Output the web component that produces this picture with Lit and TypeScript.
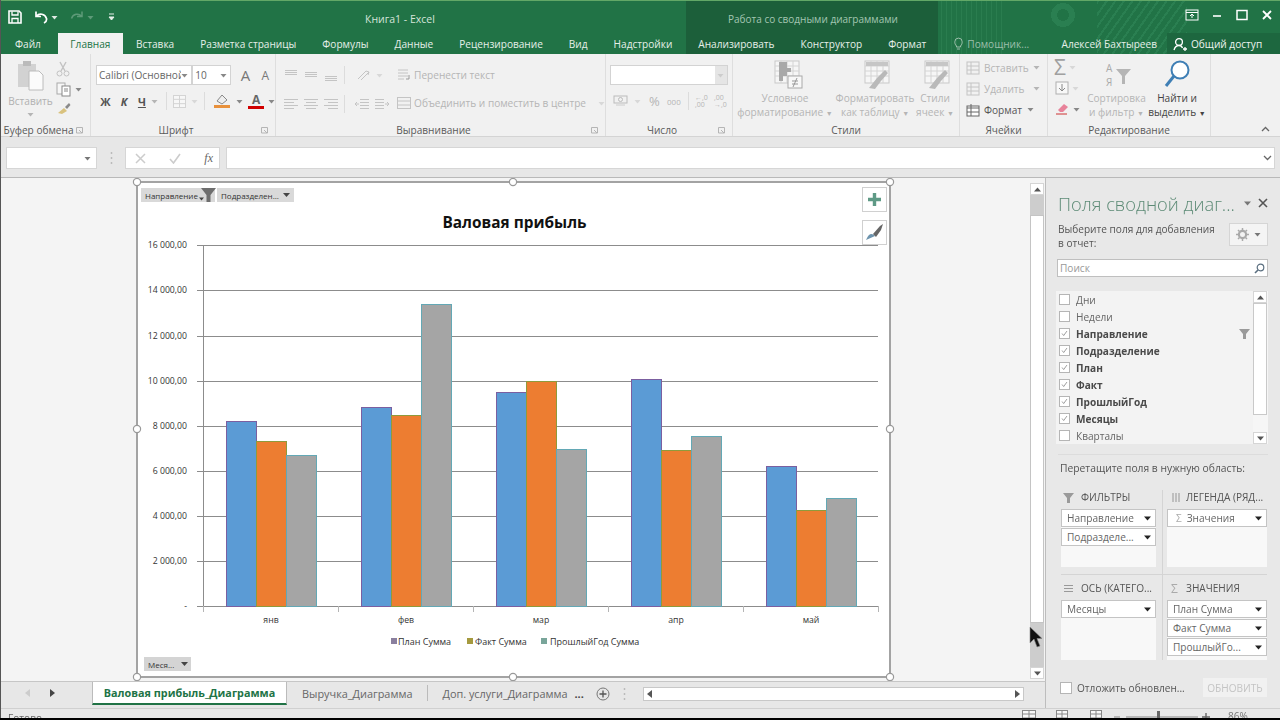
import { LitElement, html, css, svg } from "lit";
import { customElement } from "lit/decorators.js";

const G = "#c4c4c4";
const ic = (w: number, h: number, body: unknown) =>
  html`<svg class="ic" width=${w} height=${h} viewBox="0 0 ${w} ${h}" fill="none">${body}</svg>`;
const caret = (c = "#b5b5b5") => ic(7, 5, svg`<path d="M0.5 1 H6.5 L3.5 4.5Z" fill=${c}/>`);

const lines = (ys: number[], xs: [number, number][]) =>
  ic(16, 14, ys.map((y, i) => svg`<path d="M${xs[i][0]} ${y}H${xs[i][1]}" stroke=${G}/>`));
const alignIcons = {
  top: lines([2.5, 4.5, 6.5], [[2, 14], [2, 14], [2, 14]]),
  mid: lines([4.5, 6.5, 8.5], [[2, 14], [2, 14], [2, 14]]),
  bot: lines([8.5, 10.5, 12.5], [[2, 14], [2, 14], [2, 14]]),
  left: lines([2.5, 5.5, 8.5, 11.5], [[1, 15], [1, 11], [1, 15], [1, 11]]),
  center: lines([2.5, 5.5, 8.5, 11.5], [[1, 15], [3, 13], [1, 15], [3, 13]]),
  right: lines([2.5, 5.5, 8.5, 11.5], [[1, 15], [5, 15], [1, 15], [5, 15]]),
  outdent: ic(16, 14, svg`<path d="M6 2.5H15M6 5.5H15M6 8.5H15M6 11.5H15M1 7H5M1 7L3 5M1 7L3 9" stroke=${G}/>`),
  indent: ic(16, 14, svg`<path d="M1 2.5H10M1 5.5H10M1 8.5H10M1 11.5H10M15 7H11M15 7L13 5M15 7L13 9" stroke=${G}/>`),
};
const gridIc = (w: number, h: number, c = G) =>
  ic(w, h, svg`<rect x=".5" y=".5" width=${w - 1} height=${h - 1} fill="#f7f7f7" stroke=${c}/>
  <path d="M${w / 2} 0V${h}M0 ${h / 3}H${w}M0 ${(2 * h) / 3}H${w}" stroke=${c}/>`);

const bigTable = (kind: string) =>
  ic(36, 30, svg`<rect x="8" y="1" width="24" height="22" fill="#f6f6f6" stroke="#c9c9c9"/>
  <path d="M8 6H32M8 11H32M8 16H32M14 1V23M20 1V23M26 1V23" stroke="#d4d4d4"/>
  ${kind === "cond"
    ? svg`<path d="M12 2H20V8H24V12H20V16H16V21H12Z" fill="#a9a9a9"/><rect x="21" y="16" width="14" height="12" fill="#f8f8f8" stroke="#aaa"/><path d="M25 21H31M25 24H31M30 18L26 27" stroke="#999"/>`
    : svg`<path d="M9 2H31V6H9Z" fill="#c6c6c6"/><path d="M12 28L20 18L28 10L31 13L24 21L18 29Z" fill="#b9b9b9"/>`}`);

const FIELDS: [string, boolean, boolean?][] = [
  ["Дни", false], ["Недели", false], ["Направление", true, true], ["Подразделение", true], ["План", true],
  ["Факт", true], ["ПрошлыйГод", true], ["Месяцы", true], ["Кварталы", false],
];

@customElement("pivot-chart")
class PivotChart extends LitElement {
  static styles = css`
    :host { display: block; }
    svg { display: block; }
    text { font-family: "Open Sans", "Noto Sans", sans-serif; }
  `;
  render() {
    const grid = [245, 290, 336, 381, 426, 471, 516, 561, 606];
    const vals = ["16 000,00", "14 000,00", "12 000,00", "10 000,00", "8 000,00", "6 000,00", "4 000,00", "2 000,00", "-"];
    const groups = [
      { x: 226, t: [421, 441, 455], l: "янв" }, { x: 361, t: [407, 415, 304], l: "фев" },
      { x: 496, t: [392, 381, 449], l: "мар" }, { x: 631, t: [379, 450, 436], l: "апр" },
      { x: 766, t: [466, 510, 498], l: "май" },
    ];
    const fill = ["#5b9bd5", "#ed7d31", "#a5a5a5"];
    const edge = ["#7b5fa0", "#8f9a3c", "#63a8b5"];
    const handles = [[137, 182], [513, 182], [890, 182], [137, 429], [890, 429], [137, 677], [513, 677], [890, 677]];
    return html`<svg width="770" height="503" viewBox="130 178 770 503">
      <rect x="137" y="182" width="753" height="495" fill="#fff" stroke="#a3a3a3" stroke-width="2"/>
      ${grid.map((y) => svg`<path d="M197 ${y}.5H878" stroke="#8c8c8c"/>`)}
      <path d="M203.5 245V612" stroke="#8c8c8c"/>
      ${[203, 338, 473, 608, 743, 878].map((x) => svg`<path d="M${x}.5 606V612" stroke="#b5b5b5"/>`)}
      ${vals.map((v, i) => svg`<text x="187" y=${grid[i] + 3} text-anchor="end" font-size="8.7" fill="#333">${v}</text>`)}
      ${groups.map((g) => svg`
        ${g.t.map((t, i) => svg`<rect x=${g.x + i * 30 + 0.5} y=${t + 0.5} width="30" height=${606 - t} fill=${fill[i]} stroke=${edge[i]}/>`)}
        <text x=${g.x + 45} y="623" text-anchor="middle" font-size="8.7" fill="#333">${g.l}</text>`)}
      <text x="514.5" y="228" text-anchor="middle" font-size="15.4" font-weight="700" fill="#111">Валовая прибыль</text>
      <rect x="391" y="638" width="6" height="6" fill="#8a7f9e"/>
      <text x="398" y="644.5" font-size="9" fill="#333">План Сумма</text>
      <rect x="467" y="638" width="6" height="6" fill="#a59a3f"/>
      <text x="475" y="644.5" font-size="9" fill="#333">Факт Сумма</text>
      <rect x="541" y="638" width="6" height="6" fill="#79a59a"/>
      <text x="550" y="644.5" font-size="9" fill="#333">ПрошлыйГод Сумма</text>

      <rect x="141" y="188" width="74" height="14" fill="#d9d9d9"/>
      <text x="145" y="198.5" font-size="8" fill="#333">Направление</text>
      <path d="M199 197.5h5l-2.5 3z" fill="#444"/>
      <path d="M201 188H216L210.5 195V202H206.5V195Z" fill="#6e6e6e"/>
      <rect x="217" y="188" width="77" height="14" fill="#d9d9d9"/>
      <text x="221" y="198.5" font-size="8" fill="#333">Подразделен...</text>
      <path d="M283 193h7l-3.5 4z" fill="#444"/>
      <rect x="144" y="657" width="47" height="14" fill="#d4d4d4"/>
      <text x="148" y="667.5" font-size="8" fill="#333">Меся...</text>
      <path d="M181 662h7l-3.5 4z" fill="#444"/>

      <rect x="862.5" y="187.5" width="24" height="24" fill="#fff" stroke="#d0d0d0"/>
      <path d="M874.5 193V206M868 199.5H881" stroke="#5f9a86" stroke-width="3.4"/>
      <rect x="862.5" y="220.5" width="24" height="24" fill="#fff" stroke="#d0d0d0"/>
      <path d="M866 240C869 233 872 233 875 236Z" fill="#6d93ad"/>
      <path d="M873 234L880 226L883 224L881 230L876 237Z" fill="#666"/>
      ${handles.map(([x, y]) => svg`<circle cx=${x} cy=${y} r="3.6" fill="#fff" stroke="#999" stroke-width="1.2"/>`)}
    </svg>`;
  }
}

@customElement("app-root")
class AppRoot extends LitElement {
  static styles = css`
    :host { display: block; width: 1280px; height: 720px; overflow: hidden; background: #000;
      font-family: "Open Sans", "Noto Sans", sans-serif; font-size: 10.1px; color: #444; }
    .ic { display: block; flex: none; }
    .app { filter: blur(0.4px); height: 718px; display: flex; flex-direction: column; border-left: 1px solid #555; box-sizing: border-box; }

    .head { flex: none; height: 54px; box-sizing: border-box; border-top: 1px solid #62a867; color: #fff;
      background:
        radial-gradient(circle at 1062px 14px, transparent 6px, #2a7f51 6px, #2a7f51 12px, transparent 12px),
        repeating-linear-gradient(90deg, #2a7d4f 0 1px, transparent 1px 5px) 940px 0 / 62px 100% no-repeat,
        repeating-linear-gradient(125deg, #2a7f51 0 2px, transparent 2px 7px) 1096px 0 / 90px 100% no-repeat,
        linear-gradient(90deg, transparent 685px, #1c5f3a 685px, #1c5f3a 937px, transparent 937px),
        #217346; }
    .title { height: 32px; display: flex; align-items: center; }
    .qat { display: flex; align-items: center; width: 364px; padding-left: 7px; box-sizing: border-box; }
    .book { width: 363px; color: #d4e4da; font-size: 10.5px; padding-top: 4px; }
    .ctx { width: 420px; color: #a3c6b2; font-size: 10px; padding-top: 4px; }
    .win { display: flex; align-items: center; margin-left: auto; gap: 12px; padding: 0 7px 5px 0; }
    .tabs { height: 21px; display: flex; align-items: stretch; padding-left: 1px; }
    .tab { padding: 0 13px; display: flex; align-items: center; color: #e6efe9; white-space: nowrap; }
    .tab.on { background: #f1f1f1; color: #217346; padding: 0 12.5px; margin-left: 4px; }
    .tab.hint { color: #9dbfab; gap: 4px; padding-left: 15px; }
    .user { margin-left: auto; padding-right: 10px; display: flex; align-items: center; color: #e6efe9; white-space: nowrap; }
    .share { width: 113px; box-sizing: border-box; background: #1d673f; display: flex; align-items: center; gap: 3px; padding-left: 6px; color: #eef4f0; white-space: nowrap; }

    .ribbon { flex: none; height: 83px; display: flex; background: #f1f1f1; border-bottom: 1px solid #d4d4d4; box-sizing: border-box; color: #b5b5b5; }
    .grp { display: flex; flex-direction: column; border-right: 1px solid #dedede; box-sizing: border-box; flex: none; }
    .body { flex: 1; display: flex; min-height: 0; }
    .lab { height: 12px; display: flex; align-items: center; color: #5a5a5a; }
    .lab span { flex: 1; text-align: center; }
    .lab i { width: 14px; display: flex; }
    .col { display: flex; flex-direction: column; }
    .row { display: flex; align-items: center; white-space: nowrap; }
    .big { display: flex; flex-direction: column; align-items: center; line-height: 14px; text-align: center; white-space: nowrap; }
    .big .pic { height: 36px; display: flex; align-items: flex-end; margin-bottom: 1px; }
    .big small { font-size: 7px; }
    .dark { color: #444; }
    .sel { height: 20px; background: #fff; border: 1px solid #d3d3d3; box-sizing: border-box; display: flex; align-items: center; color: #666; padding-left: 2px; justify-content: space-between; padding-right: 3px; white-space: nowrap; overflow: hidden; }
    .vsep { width: 1px; height: 18px; background: #dcdcdc; flex: none; }
    .bold { font-weight: 700; color: #555; font-size: 11px; }
    .font1 { width: 98px; }
    .font2 { width: 39px; }

    .fbar { flex: none; height: 41px; background: #e7e7e7; display: flex; align-items: center; padding: 2px 5px 0 5px; box-sizing: border-box; border-bottom: 1px solid #b9b9b9; }
    .fbox { height: 22px; background: #fff; border: 1px solid #d6d6d6; box-sizing: border-box; display: flex; align-items: center; flex: none; }

    .work { flex: 1; min-height: 0; display: flex; }
    .leftc { flex: 1; min-width: 0; display: flex; flex-direction: column; }
    .sheetrow { flex: 1; min-height: 0; display: flex; background: #f4f4f4; border-right: 1px solid #bdbdbd; }
    .canvas { flex: none; width: 1029px; padding-left: 129px; box-sizing: border-box; }
    .vbar { width: 15px; display: flex; flex-direction: column; padding-top: 5px; box-sizing: border-box; background: #f4f4f4; position: relative; }
    .sb { height: 12px; background: #fff; border: 1px solid #d5d5d5; box-sizing: border-box; display: flex; align-items: center; justify-content: center; flex: none; width: 14px; }
    .vtr { height: 20px; background: #cdcdcd; width: 14px; }
    .vth { height: 408px; background: #fff; border: 1px solid #c4c4c4; box-sizing: border-box; width: 14px; }
    .vtr2 { flex: 1; background: #cdcdcd; width: 14px; }
    .cursor { position: absolute; left: -1px; top: 448px; }

    .stabs { flex: none; height: 27px; display: flex; background: #e7e7e7; border-top: 1px solid #c6c6c6; border-right: 1px solid #bdbdbd; box-sizing: border-box; font-size: 10.9px; color: #666; }
    .nav { width: 91px; display: flex; align-items: center; gap: 20px; padding: 0 0 4px 24px; box-sizing: border-box; }
    .stab { display: flex; align-items: center; padding: 0 15px; white-space: nowrap; height: 23px; }
    .stab.on { width: 195px; box-sizing: border-box; justify-content: center; padding: 0; background: #fff; color: #217346; font-weight: 700; border-bottom: 2px solid #217346; border-left: 1px solid #bbb; border-right: 1px solid #bbb; font-size: 10.8px; }
    .stab.cut { width: 126px; padding: 0; margin: 0 6px 0 14px; overflow: hidden; display: block; line-height: 23px; }
    .tsep { width: 1px; height: 16px; background: #bbb; margin-top: 3px; }
    .hbar { height: 14px; width: 381px; margin: 5px 0 0 17px; background: #fff; border: 1px solid #c8c8c8; box-sizing: border-box; display: flex; justify-content: space-between; align-items: center; padding: 0 3px; }

    .panel { flex: none; width: 234px; background: #e8e8e8; box-sizing: border-box; padding: 14px 12px 0 12px; display: flex; flex-direction: column; }
    .ptitle { display: flex; align-items: center; height: 22px; font-size: 18.3px; color: #5c8a75; white-space: nowrap; font-weight: 300; }
    .ptitle span { width: 184px; overflow: hidden; }
    .pctl { display: flex; align-items: center; gap: 7px; margin-left: 3px; }
    .phint { display: flex; justify-content: space-between; margin-top: 8px; height: 29px; line-height: 14px; color: #555; }
    .gear { width: 39px; height: 23px; background: #f4f4f4; border: 1px solid #d5d5d5; box-sizing: border-box; display: flex; align-items: center; justify-content: center; gap: 5px; margin-top: 1px; }
    .search { margin-top: 8px; margin-left: -1px; height: 18px; background: #fff; border: 1px solid #bfbfbf; box-sizing: border-box; display: flex; align-items: center; justify-content: space-between; padding: 0 2px 0 2px; color: #999; }
    .flist { margin: 14px 0 0 -2px; height: 153px; background: #f3f3f3; display: flex; }
    .frows { flex: 1; }
    .f { height: 17px; display: flex; align-items: center; gap: 6px; padding-left: 3px; color: #666; }
    .f.b { font-weight: 700; color: #4a4a4a; }
    .f svg.flt { margin-left: auto; margin-right: 3px; }
    .cb { width: 11px; height: 11px; background: #fff; border: 1px solid #b5b5b5; box-sizing: border-box; flex: none; display: block; }
    .fsb { width: 15px; display: flex; flex-direction: column; background: #f6f6f6; }
    .fsb .th { flex: 1; background: #fff; border: 1px solid #c9c9c9; box-sizing: border-box; width: 14px; margin-bottom: 17px; }
    .psep { margin: 10px 0 0 0; height: 1px; background: #dcdcdc; }
    .drag { margin-top: 6px; height: 14px; padding-left: 2px; color: #555; font-size: 10.3px; white-space: nowrap; }
    .areas { margin: 15px 0 0 3px; display: grid; grid-template-columns: 95px 100px; column-gap: 11px; grid-template-rows: 85px 85px; }
    .area { display: flex; flex-direction: column; }
    .ah { height: 14px; display: flex; align-items: center; gap: 7px; color: #555; white-space: nowrap; padding-left: 2px; margin-bottom: 5px; }
    .ah.r { padding-left: 4px; gap: 4px; }
    .abox { background: #f8f8f8; height: 60px; display: flex; flex-direction: column; gap: 1px; }
    .abox.short { height: 58px; }
    .item { height: 18px; background: #fff; border: 1px solid #c4c4c4; box-sizing: border-box; display: flex; align-items: center; justify-content: space-between; padding: 0 4px 0 5px; color: #666; white-space: nowrap; flex: none; }
    .item b { font-weight: 400; display: flex; align-items: center; gap: 5px; }
    .item b i { font-style: normal; color: #aaa; padding-left: 3px; }
    .pbot { margin-top: 18px; display: flex; align-items: center; padding-left: 2px; }
    .pbot .t { margin-left: 5px; width: 126px; color: #555; white-space: nowrap; }
    .upd { width: 64px; height: 19px; background: #f1f1f1; color: #c4c4c4; display: flex; align-items: center; justify-content: center; }
    .hr { border-bottom: 1px solid #d4d4d4; box-sizing: border-box; }
    .lc { border-right: 1px solid #d4d4d4; margin-right: -7px; box-sizing: border-box; padding-right: 6px; }
    .rc { margin-left: -4px; padding-left: 4px; box-sizing: border-box; }
    .low { padding-top: 6px; }

    .status { flex: none; height: 10px; overflow: hidden; background: #e8e8e8; display: flex; border-top: 1px solid #d0d0d0; box-sizing: border-box; }
    .ready { padding: 3px 0 0 7px; color: #666; width: 1021px; box-sizing: border-box; line-height: 12px; }
    .sright { display: flex; align-items: flex-start; color: #777; padding-top: 1px; }
  `;

  qat() {
    return html`<div class="qat">
      ${ic(14, 14, svg`<path d="M1 1H11L13 3V13H1Z" stroke="#fff" stroke-width="1.6"/><path d="M4 1.5V5H10V1.5M4 13V8.5H10V13" stroke="#fff" stroke-width="1.3"/>`)}
      <span style="width:12px"></span>
      ${ic(14, 14, svg`<path d="M2 1.5V6.5H7M2.5 6.2C5 3 11 3.5 12.5 8.5C12.8 10 12 12 10 13" stroke="#fff" stroke-width="1.7"/>`)}
      <span style="width:3px"></span>${caret("#dfe9e3")}
      <span style="width:12px"></span>
      ${ic(14, 14, svg`<path d="M12 1.5V6.5H7M11.5 6.2C9 3 3 3.5 1.5 8.5" stroke="#5d9a78" stroke-width="1.5"/>`)}
      <span style="width:3px"></span>${caret("#5d9a78")}
      <span style="width:14px"></span>
      ${ic(7, 8, svg`<path d="M1 1H6M1 4H6L3.5 7Z" stroke="#e6efe9" fill="#e6efe9"/>`)}
    </div>`;
  }

  lab(t: string, launch = true) {
    return html`<div class="lab"><span>${t}</span><i>${launch ? ic(7, 7, svg`<path d="M.5 6V.5H6.5V6H.5M3 3L6 6" stroke="#b5b5b5"/>`) : ""}</i></div>`;
  }

  ribbon() {
    return html`<div class="ribbon">
      <div class="grp" style="width:90px">
        <div class="body" style="padding:5px 0 0 6px">
          <div class="big" style="width:47px;color:#b0b0b0">
            <div class="pic" style="height:32px;margin-bottom:1px">
              ${ic(28, 31, svg`<rect x="1" y="4" width="18" height="23" fill="#d2d2d2"/><rect x="6" y="1" width="8" height="5" fill="#bbb"/><path d="M12 11H22L26 15V30H12Z" fill="#fbfbfb" stroke="#bcbcbc"/>`)}
            </div>
            <span style="margin-top:2px">Вставить</span><span style="display:flex;justify-content:center;margin-top:4px">${caret()}</span>
          </div>
          <div class="col" style="gap:5px;padding-top:2px;margin-left:2px">
            ${ic(14, 16, svg`<path d="M4 1L9 10M10 1L5 10" stroke="#c2c2c2" stroke-width="1.4"/><circle cx="3.5" cy="12.5" r="2.5" stroke="#c2c2c2"/><circle cx="10.5" cy="12.5" r="2.5" stroke="#c2c2c2"/>`)}
            <div class="row" style="gap:4px">${ic(15, 15, svg`<rect x="1" y="1" width="8" height="11" fill="#f7f7f7" stroke="#aaa"/><rect x="6" y="4" width="8" height="10" fill="#fff" stroke="#888"/><path d="M8 7H12M8 9H12" stroke="#888"/>`)}${caret("#888")}</div>
            ${ic(15, 13, svg`<path d="M2 11L8 6L11 9L6 12Z" fill="#d9c27e"/><path d="M9 5L13 1L14.5 3L11 7Z" fill="#8a8a8a"/>`)}
          </div>
        </div>
        ${this.lab("Буфер обмена")}
      </div>

      <div class="grp" style="width:185px">
        <div class="body col" style="padding:11px 0 0 5px">
          <div class="row">
            <div class="sel font1"><span style="overflow:hidden">Calibri (Основной</span>${caret("#888")}</div>
            <div class="sel font2"><span>10</span>${caret("#888")}</div>
            <span class="dark" style="font-size:15px;margin-left:5px;width:20px;text-align:center;color:#777">A</span>
            <span class="dark" style="font-size:12px;width:20px;text-align:center;color:#777">A</span>
          </div>
          <div class="row" style="margin-top:7px">
            <span class="bold" style="width:20px;text-align:center">Ж</span>
            <span class="bold" style="width:19px;text-align:center;font-style:italic">К</span>
            <span class="bold" style="width:19px;text-align:center;text-decoration:underline">Ч</span>
            <span style="width:16px">${caret()}</span>
            <div class="vsep" style="margin-right:6px"></div>
            ${gridIc(13, 13, "#d4d4d4")}<span style="width:5px"></span>${caret("#d8d8d8")}
            <div class="vsep" style="margin:0 8px 0 6px"></div>
            ${ic(18, 16, svg`<path d="M4 8L9 2L14 7L9 11Z" fill="#eee" stroke="#888"/><rect x="1" y="12" width="16" height="3" fill="#e8913c"/>`)}
            <span style="width:5px"></span>${caret("#888")}
            <span style="width:6px"></span>
            <div class="col" style="align-items:center;width:16px;color:#c00;font-weight:700;line-height:11px;font-size:12px">
              <span style="color:#666">A</span><span style="width:16px;height:3px;background:#d00000;margin-top:1px"></span>
            </div>
            <span style="width:4px"></span>${caret("#888")}
          </div>
        </div>
        ${this.lab("Шрифт")}
      </div>

      <div class="grp" style="width:330px">
        <div class="body" style="padding:12px 0 0 7px">
          <div class="col" style="gap:11px;width:114px">
            <div class="row" style="gap:4px">${alignIcons.top}${alignIcons.mid}${alignIcons.bot}<div class="vsep" style="margin:0 7px 0 1px"></div>
              ${ic(16, 14, svg`<path d="M2 11L10 3M5 12L13 4M10 3L13 4L12 7" stroke=${G}/>`)}${caret("#d8d8d8")}</div>
            <div class="row" style="gap:4px">${alignIcons.left}${alignIcons.center}${alignIcons.right}<div class="vsep" style="margin:0 5px 0 1px"></div>
              ${alignIcons.outdent}${alignIcons.indent}</div>
          </div>
          <div class="col" style="gap:14px;padding-top:2px">
            <div class="row" style="gap:2px;height:14px">${ic(16, 14, svg`<path d="M2 2H12M2 5H12M2 8H12M2 11H8" stroke=${G}/><path d="M13 7V11H10" stroke="#999"/>`)}<span>Перенести текст</span></div>
            <div class="row" style="gap:2px;height:14px">${ic(16, 14, svg`<rect x="1.5" y="1.5" width="13" height="11" stroke=${G}/><path d="M1 5H15M1 9H15" stroke=${G}/>`)}<span>Объединить и поместить в центре</span><span style="width:8px"></span>${caret("#d8d8d8")}</div>
          </div>
        </div>
        ${this.lab("Выравнивание")}
      </div>

      <div class="grp" style="width:127px">
        <div class="body col" style="padding:11px 0 0 4px">
          <div class="sel" style="width:118px;background:linear-gradient(90deg,#fff 90%,#e5e5e5 90%)"><span></span>${caret("#ccc")}</div>
          <div class="row" style="margin-top:7px;padding-left:3px">
            ${ic(16, 14, svg`<rect x="1" y="2" width="13" height="7" stroke="#bbb"/><circle cx="7.5" cy="5.5" r="2" stroke="#bbb"/><path d="M3 11H12" stroke="#ccc"/>`)}
            <span style="width:5px"></span>${caret("#d8d8d8")}
            <span style="width:8px"></span><span style="font-size:13px;width:14px">%</span>
            <span style="width:4px"></span><span style="font-size:8px;width:18px">000</span>
            <div class="vsep" style="margin:0 6px 0 3px"></div>
            <span style="font-size:7px;line-height:7px;width:19px">←,0<br>,00</span>
            <span style="font-size:7px;line-height:7px;width:16px">,00<br>→,0</span>
          </div>
        </div>
        ${this.lab("Число")}
      </div>

      <div class="grp" style="width:227px">
        <div class="body">
          <div class="big" style="width:104px"><div class="pic">${bigTable("cond")}</div><span>Условное</span><span>форматирование <small>▼</small></span></div>
          <div class="big" style="width:76px"><div class="pic">${bigTable("tbl")}</div><span>Форматировать</span><span>как таблицу <small>▼</small></span></div>
          <div class="big" style="width:44px"><div class="pic">${bigTable("cell")}</div><span>Стили</span><span>ячеек <small>▼</small></span></div>
        </div>
        <div class="lab"><span>Стили</span></div>
      </div>

      <div class="grp" style="width:88px">
        <div class="body col" style="padding:3px 0 0 6px">
          ${[["Вставить", "#c4c4c4", "#b5b5b5"], ["Удалить", "#c4c4c4", "#b5b5b5"], ["Формат", "#666", "#555"]].map(
            ([t, c, tc], i) => html`<div class="row" style="height:21px;color:${tc};gap:4px">
              ${ic(14, 14, svg`<rect x="1" y=${i === 2 ? 3 : 1} width="12" height=${i === 2 ? 10 : 12} fill=${i === 2 ? "#fff" : "none"} stroke=${c}/><path d="M1 5H13M1 9H13M5 1V13" stroke=${c}/>`)}
              <span style="width:45px">${t}</span>${i === 2 ? html`<span style="margin-left:-6px">${caret("#888")}</span>` : caret()}
            </div>`)}
        </div>
        <div class="lab"><span>Ячейки</span></div>
      </div>

      <div class="grp" style="width:163px">
        <div class="body" style="padding:4px 0 0 6px">
          <div class="col" style="width:32px;gap:3px">
            <div class="row" style="gap:3px;height:18px"><span style="font-size:21px;line-height:18px;color:#a0a0a0">Σ</span>${caret("#d8d8d8")}</div>
            <div class="row" style="gap:3px;height:18px;padding-left:1px">${ic(14, 14, svg`<rect x="1" y="1" width="12" height="12" stroke="#b0b0b0" fill="#f8f8f8"/><path d="M7 3V10M4 7L7 10L10 7" stroke="#888"/>`)}${caret("#d8d8d8")}</div>
            <div class="row" style="gap:3px;height:18px;padding-left:1px">${ic(15, 14, svg`<path d="M3 8L9 2L13 5L8 10H5Z" fill="#e8829a"/><path d="M1 12H12" stroke="#c33"/>`)}${caret("#888")}</div>
          </div>
          <div class="big" style="width:59px;margin-left:1px">
            <div class="pic" style="height:32px">${ic(32, 30, svg`<text x="5" y="12" font-size="10" fill="#aaa" font-family="Open Sans">А</text><text x="5" y="26" font-size="10" fill="#aaa" font-family="Open Sans">Я</text><path d="M15 9H30L24 16V24H21V16Z" fill="#b5b5b5"/>`)}</div>
            <span>Сортировка</span><span>и фильтр <small>▼</small></span>
          </div>
          <div class="big dark" style="width:60px;margin-left:1px">
            <div class="pic" style="height:32px">${ic(28, 31, svg`<circle cx="17" cy="11" r="8.5" fill="#fff" stroke="#3f7fb5" stroke-width="2"/><path d="M11 17L3 27" stroke="#3f7fb5" stroke-width="3"/>`)}</div>
            <span>Найти и</span><span>выделить <small>▼</small></span>
          </div>
        </div>
        <div class="lab"><span>Редактирование</span></div>
      </div>

      <div class="body" style="justify-content:flex-end;align-items:flex-end;padding:0 10px 4px 0">
        ${ic(9, 6, svg`<path d="M1 5L4.5 1.5L8 5" stroke="#666" stroke-width="1.3"/>`)}
      </div>
    </div>`;
  }

  item(t: string, sig = false) {
    return html`<div class="item"><b>${sig ? html`<i>Σ</i>` : ""}${t}</b>${ic(7, 5, svg`<path d="M0 .5H7L3.5 4.5Z" fill="#222"/>`)}</div>`;
  }

  render() {
    return html`<div class="app">
      <div class="head">
        <div class="title">
          ${this.qat()}
          <div class="book">Книга1 - Excel</div>
          <div class="ctx">Работа со сводными диаграммами</div>
          <div class="win">
            ${ic(14, 12, svg`<rect x="1" y="1" width="12" height="10" stroke="#fff"/><path d="M1 3.5H13M7 9V5M5 7L7 5L9 7" stroke="#fff"/>`)}
            ${ic(12, 12, svg`<path d="M2 7H10" stroke="#fff" stroke-width="1.6"/>`)}
            ${ic(14, 12, svg`<rect x="2" y="1.5" width="10" height="9" stroke="#fff" stroke-width="1.5"/>`)}
            ${ic(12, 12, svg`<path d="M2 2L10 10M10 2L2 10" stroke="#fff" stroke-width="1.8"/>`)}
          </div>
        </div>
        <div class="tabs">
          ${["Файл", "Главная", "Вставка", "Разметка страницы", "Формулы", "Данные", "Рецензирование", "Вид", "Надстройки", "Анализировать", "Конструктор", "Формат"].map(
            (t, i) => html`<div class="tab ${i === 1 ? "on" : ""}">${t}</div>`)}
          <div class="tab hint">${ic(9, 13, svg`<path d="M2.5 9C1 7.5 .8 6 .8 4.8A3.7 3.7 0 0 1 8.2 4.8C8.2 6 8 7.5 6.5 9V10H2.5ZM3 12H6" stroke="#9dbfab"/>`)}Помощник...</div>
          <div class="user">Алексей Бахтыреев</div>
          <div class="share">${ic(15, 14, svg`<circle cx="6" cy="5" r="3.4" stroke="#fff" stroke-width="1.3"/><path d="M1 13C2 9.5 4 8.5 6 8.5C8 8.5 9 9.5 9.5 11M10 12H14M12 10V14" stroke="#fff" stroke-width="1.3"/>`)}Общий доступ</div>
        </div>
      </div>

      ${this.ribbon()}

      <div class="fbar">
        <div class="fbox" style="width:91px;justify-content:flex-end;padding-right:5px">${caret("#777")}</div>
        <div class="row" style="width:28px;justify-content:center">${ic(3, 14, svg`<path d="M1.5 1V3M1.5 6V8M1.5 11V13" stroke="#bbb" stroke-width="1.5"/>`)}</div>
        <div class="fbox" style="width:95px;justify-content:space-between;padding:0 6px 0 9px">
          ${ic(11, 11, svg`<path d="M1 1L10 10M10 1L1 10" stroke="#ccc" stroke-width="1.5"/>`)}
          ${ic(12, 11, svg`<path d="M1 6L4.5 10L11 1" stroke="#ccc" stroke-width="1.6"/>`)}
          <i style="font-family:'Liberation Serif',serif;font-size:12px;color:#666">fx</i>
        </div>
        <div class="fbox" style="flex:1;margin-left:6px;justify-content:flex-end;padding-right:2px">${ic(9, 6, svg`<path d="M1 1L4.5 4.5L8 1" stroke="#666" stroke-width="1.3"/>`)}</div>
      </div>

      <div class="work">
        <div class="leftc">
          <div class="sheetrow">
            <div class="canvas"><pivot-chart></pivot-chart></div>
            <div class="vbar">
              <div class="sb">${ic(7, 5, svg`<path d="M0 4.5H7L3.5 .5Z" fill="#555"/>`)}</div>
              <div class="vtr"></div><div class="vth"></div><div class="vtr2"></div>
              <div class="sb" style="margin-bottom:2px">${ic(7, 5, svg`<path d="M0 .5H7L3.5 4.5Z" fill="#555"/>`)}</div>
              <div class="cursor">${ic(15, 23, svg`<path d="M1 1V17L5 13L8 21L11 20L8 12.5H13Z" fill="#111" stroke="#888" stroke-width=".6"/>`)}</div>
            </div>
          </div>
          <div class="stabs">
            <div class="nav">${ic(5, 8, svg`<path d="M5 0V8L0 4Z" fill="#ccc"/>`)}${ic(5, 8, svg`<path d="M0 0V8L5 4Z" fill="#444"/>`)}</div>
            <div class="stab on">Валовая прибыль_Диаграмма</div>
            <div class="stab">Выручка_Диаграмма</div>
            <div class="tsep"></div>
            <div class="stab cut">Доп. услуги_Диаграмма</div>
            <div class="row" style="height:23px;color:#444;font-weight:700;width:22px">...</div>
            <div class="row" style="height:23px">${ic(14, 14, svg`<circle cx="7" cy="7" r="6" stroke="#777"/><path d="M7 3.5V10.5M3.5 7H10.5" stroke="#555" stroke-width="1.3"/>`)}</div>
            <div class="row" style="height:23px;margin-left:13px">${ic(3, 14, svg`<path d="M1.5 1V3M1.5 6V8M1.5 11V13" stroke="#bbb" stroke-width="1.5"/>`)}</div>
            <div class="hbar">${ic(5, 8, svg`<path d="M5 0V8L0 4Z" fill="#555"/>`)}${ic(5, 8, svg`<path d="M0 0V8L5 4Z" fill="#555"/>`)}</div>
          </div>
        </div>

        <div class="panel">
          <div class="ptitle"><span>Поля сводной диаг...</span>
            <div class="pctl">${ic(7, 5, svg`<path d="M0 .5H7L3.5 4.5Z" fill="#777"/>`)}${ic(10, 10, svg`<path d="M1 1L9 9M9 1L1 9" stroke="#555" stroke-width="1.6"/>`)}</div>
          </div>
          <div class="phint">
            <div>Выберите поля для добавления<br>в отчет:</div>
            <div class="gear">${ic(13, 13, svg`<circle cx="6.5" cy="6.5" r="3.6" stroke="#aaa" stroke-width="2.2"/><path d="M6.5 0V2.5M6.5 10.5V13M0 6.5H2.5M10.5 6.5H13M2 2L3.5 3.5M9.5 9.5L11 11M11 2L9.5 3.5M3.5 9.5L2 11" stroke="#aaa" stroke-width="1.5"/>`)}${caret("#777")}</div>
          </div>
          <div class="search">Поиск${ic(11, 11, svg`<circle cx="6.5" cy="4.5" r="3.3" stroke="#5b6f80" stroke-width="1.2"/><path d="M4 7L1 10" stroke="#5b6f80" stroke-width="1.6"/>`)}</div>
          <div class="flist">
            <div class="frows">
              ${FIELDS.map(([n, on, flt]) => html`<div class="f ${on ? "b" : ""}">
                <svg class="cb" viewBox="0 0 11 11">${on ? svg`<path d="M2.5 5.5L4.5 8L8.5 2.5" stroke="#888" fill="none"/>` : ""}</svg>${n}
                ${flt ? html`<svg class="flt" width="11" height="11" viewBox="0 0 11 11"><path d="M0 1H11L7 6V11H4V6Z" fill="#9a9a9a"/></svg>` : ""}
              </div>`)}
            </div>
            <div class="fsb">
              <div class="sb">${ic(7, 5, svg`<path d="M0 4.5H7L3.5 .5Z" fill="#555"/>`)}</div>
              <div class="th"></div>
              <div class="sb">${ic(7, 5, svg`<path d="M0 .5H7L3.5 4.5Z" fill="#555"/>`)}</div>
            </div>
          </div>
          <div class="psep"></div>
          <div class="drag">Перетащите поля в нужную область:</div>
          <div class="areas">
            <div class="area hr lc">
              <div class="ah">${ic(11, 11, svg`<path d="M0 1H11L7 6V11H4V6Z" fill="#9a9a9a"/>`)}ФИЛЬТРЫ</div>
              <div class="abox short">${this.item("Направление")}${this.item("Подразделе...")}</div>
            </div>
            <div class="area hr rc">
              <div class="ah r">${ic(11, 11, svg`<path d="M2 1V10M5 1V10M8 1V10" stroke="#aaa" stroke-width="1.3"/>`)}ЛЕГЕНДА (РЯД...</div>
              <div class="abox short">${this.item("Значения", true)}</div>
            </div>
            <div class="area lc low">
              <div class="ah">${ic(11, 11, svg`<path d="M1 2.5H10M1 5.5H10M1 8.5H10" stroke="#999"/>`)}ОСЬ (КАТЕГО...</div>
              <div class="abox">${this.item("Месяцы")}</div>
            </div>
            <div class="area rc low">
              <div class="ah r"><span style="color:#aaa;width:11px;font-size:12px">Σ</span>ЗНАЧЕНИЯ</div>
              <div class="abox">${this.item("План Сумма")}${this.item("Факт Сумма")}${this.item("ПрошлыйГо...")}</div>
            </div>
          </div>
          <div class="pbot">
            <span class="cb" style="width:12px;height:12px"></span>
            <span class="t">Отложить обновлен...</span>
            <div class="upd">ОБНОВИТЬ</div>
          </div>
        </div>
      </div>

      <div class="status">
        <div class="ready">Готово</div>
        <div class="sright">
          ${gridIc(14, 12, "#888")}<span style="width:20px"></span>${gridIc(12, 12, "#888")}<span style="width:22px"></span>${gridIc(12, 12, "#888")}
          ${ic(120, 10, svg`<path d="M12 7H18M24 7H96" stroke="#888"/><rect x="55" y="1" width="3" height="9" fill="#666"/><path d="M100 7H108M104 3V10" stroke="#666" stroke-width="1.4"/>`)}
          <span style="margin-left:6px;line-height:12px">86%</span>
        </div>
      </div>
    </div>`;
  }
}
